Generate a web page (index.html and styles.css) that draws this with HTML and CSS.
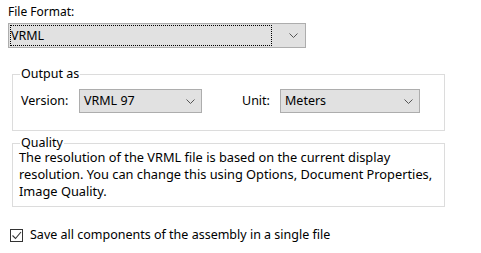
FILE: index.html
```html
<!DOCTYPE html>
<html lang="en">
<head>
  <meta charset="UTF-8">
  <title>VRML Export Options</title>
  <meta name="viewport" content="width=device-width, initial-scale=1.0">
  <link rel="stylesheet" href="styles.css">
</head>
<body>

  <div class="page">
    <div class="label">File Format:</div>
    <div class="combo combo-main">
      <span class="focus">VRML</span>
      <svg class="arrow" width="9" height="5" viewBox="0 0 9 5"><path d="M0.5 0.5 L4.5 4.5 L8.5 0.5" fill="none" stroke="#555" stroke-width="1"/></svg>
    </div>

    <fieldset class="group group-output">
      <legend>Output as</legend>
      <div class="row">
        <span class="field-label version-label">Version:</span>
        <div class="combo combo-version">
          <span class="value">VRML 97</span>
          <svg class="arrow" width="9" height="5" viewBox="0 0 9 5"><path d="M0.5 0.5 L4.5 4.5 L8.5 0.5" fill="none" stroke="#555" stroke-width="1"/></svg>
        </div>
        <span class="field-label unit-label">Unit:</span>
        <div class="combo combo-unit">
          <span class="value">Meters</span>
          <svg class="arrow" width="9" height="5" viewBox="0 0 9 5"><path d="M0.5 0.5 L4.5 4.5 L8.5 0.5" fill="none" stroke="#555" stroke-width="1"/></svg>
        </div>
      </div>
    </fieldset>

    <fieldset class="group group-quality">
      <legend>Quality</legend>
      <p class="note">The resolution of the VRML file is based on the current display resolution. You can change this using Options, Document Properties, Image Quality.</p>
    </fieldset>

    <label class="check">
      <span class="box">
        <svg width="11" height="11" viewBox="0 0 11 11"><path d="M1.5 5.5 L4.5 8.5 L10 2" fill="none" stroke="#333" stroke-width="1.1"/></svg>
      </span>
      <span>Save all components of the assembly in a single file</span>
    </label>
  </div>

</body>
</html>
```

FILE: styles.css
```css
* { margin: 0; padding: 0; box-sizing: border-box; }
body { background: #fff; color: #000; font-family: 'Noto Sans', sans-serif; font-size: 12.5px; }

.page {
  width: 481px;
  height: 253px;
  padding: 4px 8px 0 8px;
}

.label {
  line-height: 16px;
  font-size: 12px;
}

.combo {
  display: flex;
  align-items: center;
  height: 24px;
  background: #e1e1e1;
  border: 1px solid #adadad;
}

.combo .value {
  flex: 1;
  padding-left: 4px;
  line-height: 16px;
}

.combo .arrow {
  margin-right: 6px;
}

.combo-main {
  width: 298px;
  height: 25px;
  margin-top: 3px;
  padding: 1px;
}

.combo-main .focus {
  flex: 1;
  height: 21px;
  line-height: 19px;
  border: 1px dotted #000;
  margin-right: 17px;
}

.group {
  width: 433px;
  margin-left: 4px;
  border: 1px solid #dcdcdc;
}

.group legend {
  padding: 0 1px;
  line-height: 12px;
}

.group-output {
  margin-top: 20px;
  padding: 9px 8px 17px 8px;
}

.group-output legend {
  margin-left: -1px;
}

.row {
  display: flex;
  align-items: center;
}

.field-label {
  line-height: 16px;
}

.version-label { width: 58px; }
.unit-label { width: 38px; margin-left: 40px; }

.combo-version { width: 123px; }
.combo-unit { width: 140px; }

.group-quality {
  margin-top: 7px;
  padding: 1px 8px 6px 6px;
}

.group-quality legend {
  margin-left: 1px;
  line-height: 10px;
}

.note {
  font-size: 12.8px;
  line-height: 17px;
}

.check {
  display: flex;
  align-items: center;
  margin-top: 20px;
  margin-left: 2px;
  gap: 7px;
  line-height: 16px;
}

.check .box {
  width: 13px;
  height: 13px;
  border: 1px solid #333;
  background: #fff;
  display: flex;
  align-items: center;
  justify-content: center;
}
```
